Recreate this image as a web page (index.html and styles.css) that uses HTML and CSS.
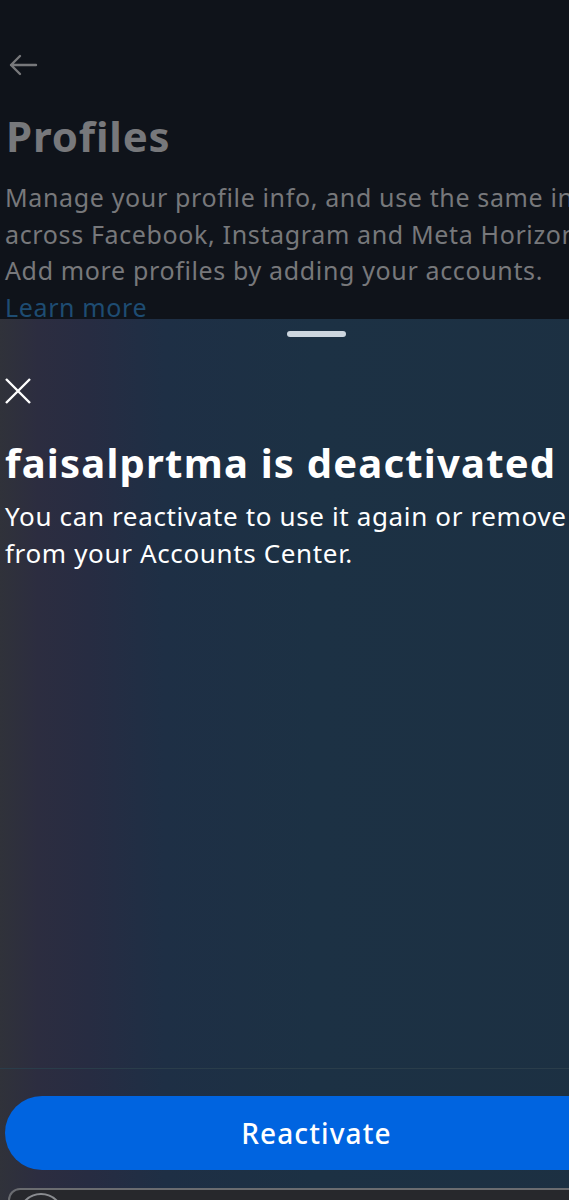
FILE: index.html
```html
<!DOCTYPE html>
<html lang="en">
<head>
<meta charset="utf-8">
<title>Profiles</title>
<link rel="stylesheet" href="styles.css">
</head>
<body>
<div class="screen">
  <div class="behind">
    <div class="back">
      <svg width="30" height="22" viewBox="0 0 30 22"><path d="M28 11H3M12 2L3 11l9 9" fill="none" stroke="#77787b" stroke-width="2.4" stroke-linecap="round" stroke-linejoin="round"/></svg>
    </div>
    <h1 class="page-title">Profiles</h1>
    <p class="page-desc">Manage your profile info, and use the same info across Facebook, Instagram and Meta Horizon. Add more profiles by adding your accounts. <span class="link">Learn more</span></p>
  </div>
  <div class="sheet">
    <div class="handle-row"><div class="handle"></div></div>
    <div class="close">
      <svg width="28" height="28" viewBox="0 0 28 28"><path d="M2 2L26 26M26 2L2 26" fill="none" stroke="#ffffff" stroke-width="2.4"/></svg>
    </div>
    <h2 class="sheet-title">faisalprtma is deactivated</h2>
    <p class="sheet-desc">You can reactivate to use it again or remove it from your Accounts Center.</p>
    <div class="spacer"></div>
    <div class="footer">
      <button class="primary">Reactivate</button>
      <div class="secondary"><span class="circle"></span></div>
    </div>
  </div>
</div>
</body>
</html>
```

FILE: styles.css
```css
html, body {
  margin: 0;
  padding: 0;
}
body {
  width: 569px;
  height: 1200px;
  overflow: hidden;
  background: #0f131a;
  font-family: "Noto Sans", "DejaVu Sans", sans-serif;
  letter-spacing: 0.04em;
}
.screen {
  width: 633px;
  height: 1200px;
  display: flex;
  flex-direction: column;
}
.behind {
  height: 319px;
  padding: 0 5px;
  box-sizing: border-box;
  overflow: hidden;
  background: #0f131a;
}
.back {
  padding-top: 54px;
  padding-left: 3px;
  height: 24px;
}
.back svg { display: block; }
.page-title {
  margin: 33px 0 0 1px;
  font-size: 42px;
  font-weight: 700;
  line-height: 50px;
  letter-spacing: 0.02em;
  color: #77787b;
}
.page-desc {
  margin: 18px 0 0;
  font-size: 25px;
  line-height: 36.5px;
  color: #77787b;
}
.link {
  color: #1e4c72;
  white-space: nowrap;
}
.sheet {
  flex: 1;
  display: flex;
  flex-direction: column;
  background:
    linear-gradient(90deg, #30323a 0%, #2c2d40 6%, #272c42 14%, #1e2f45 26%, #1c3144 50%, #1c3042 100%);
  padding: 0 5px;
}
.handle-row {
  display: flex;
  justify-content: center;
  padding-top: 12px;
}
.handle {
  width: 59px;
  height: 6px;
  border-radius: 3px;
  background: #cdd6df;
}
.close {
  margin-top: 40px;
  height: 28px;
}
.close svg { display: block; margin-left: -1px; }
.sheet-title {
  margin: 33px 0 0;
  font-size: 40px;
  font-weight: 700;
  line-height: 50px;
  letter-spacing: 0.03em;
  color: #ffffff;
}
.sheet-desc {
  margin: 10px 0 0;
  font-size: 26px;
  line-height: 37px;
  color: #ffffff;
}
.spacer { flex: 1; }
.footer {
  border-top: 1px solid #2a3d4a;
  margin: 0 -5px;
  padding: 27px 0 0 5px;
  display: flex;
  flex-direction: column;
}
.primary {
  height: 74px;
  border: none;
  border-radius: 37px;
  background: #0064e0;
  color: #ffffff;
  font-family: "Noto Sans", "DejaVu Sans", sans-serif;
  font-size: 28px;
  letter-spacing: 0.04em;
  font-weight: 500;
  margin-right: 5px;
}
.secondary {
  margin-top: 18px;
  margin-left: 3px;
  height: 7px;
  overflow: hidden;
  border: 2px solid #6a6c70;
  border-bottom: none;
  border-radius: 30px 30px 0 0;
  background: #27282c;
  padding: 3px 0 0 8px;
}
.circle {
  display: block;
  width: 42px;
  height: 42px;
  border-radius: 50%;
  border: 2px solid #8a8c90;
}
```
